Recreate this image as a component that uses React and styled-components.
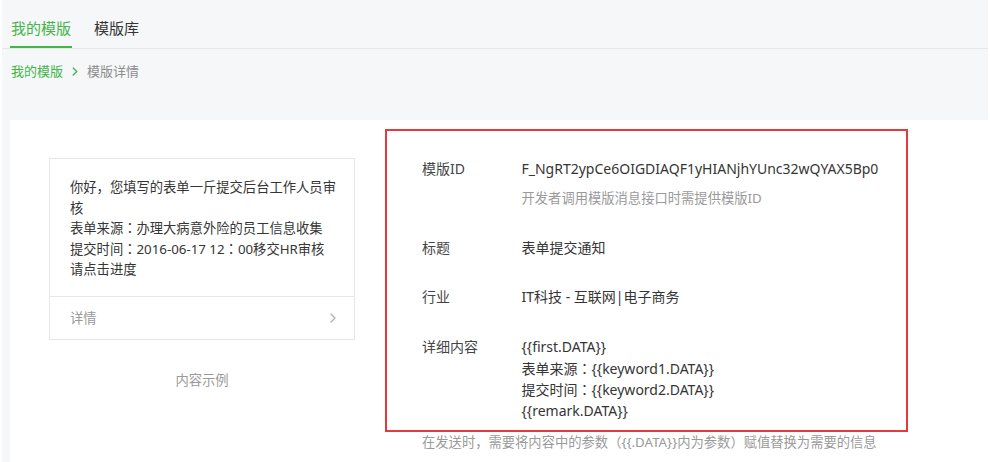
import React from "react";
import styled, { createGlobalStyle } from "styled-components";

const Global = createGlobalStyle`
  html, body { margin: 0; padding: 0; background: #ffffff; }
  body { font-family: "Noto Sans", "Noto Sans CJK SC", sans-serif; color: #353535; }
  * { box-sizing: border-box; }
`;

const Page = styled.div`
  margin: 0 2px;
  height: 462px;
  background: #f6f7f9;
  overflow: hidden;
`;

const TabBar = styled.div`
  display: flex;
  align-items: flex-end;
  height: 49px;
  padding-left: 8px;
  border-bottom: 1px solid #e4e8eb;
`;

const Tab = styled.div`
  font-size: 15px;
  line-height: 20px;
  padding: 0 1px 8px;
  margin-right: 21px;
  color: ${(p) => (p.$active ? "#44b549" : "#353535")};
  border-bottom: 2px solid ${(p) => (p.$active ? "#44b549" : "transparent")};
`;

const Crumbs = styled.div`
  display: flex;
  align-items: center;
  gap: 9px;
  margin: 12px 0 0 9px;
  font-size: 13px;
  line-height: 20px;
`;

const CrumbLink = styled.span`
  color: #44b549;
`;

const CrumbCurrent = styled.span`
  color: #8d8d8d;
`;

const Panel = styled.div`
  display: flex;
  align-items: flex-start;
  gap: 30px;
  margin: 39px 0 0 8px;
  padding: 9px 0 0 39px;
  background: #ffffff;
  min-height: 350px;
`;

const ExampleCol = styled.div`
  width: 306px;
  margin-top: 29px;
  display: flex;
  flex-direction: column;
  align-items: stretch;
`;

const Card = styled.div`
  border: 1px solid #e7e7eb;
  background: #fff;
`;

const CardBody = styled.div`
  padding: 18px 16px 16px 20px;
  font-size: 13.3px;
  line-height: 20.6px;
  color: #353535;
`;

const CardFoot = styled.div`
  display: flex;
  align-items: center;
  justify-content: space-between;
  height: 43px;
  padding: 0 18px 0 20px;
  border-top: 1px solid #e7e7eb;
  font-size: 13.3px;
  color: #9a9a9a;
`;

const Caption = styled.div`
  margin-top: 30px;
  text-align: center;
  font-size: 13.3px;
  line-height: 20px;
  color: #9a9a9a;
`;

const InfoCol = styled.div`
  display: flex;
  flex-direction: column;
`;

const Highlight = styled.div`
  width: 523px;
  border: 2px solid #e5393c;
  padding: 28px 20px 9px 35px;
`;

const Row = styled.div`
  display: flex;
  font-size: 14px;
  line-height: 20px;
  margin-top: ${(p) => p.$gap || 0}px;
`;

const Label = styled.div`
  width: 99.5px;
  flex: none;
  color: #454545;
`;

const Value = styled.div`
  color: #353535;
  line-height: ${(p) => p.$lh || "20px"};
`;

const Hint = styled.div`
  margin-top: 9px;
  color: #9a9a9a;
  font-size: 13.3px;
  line-height: 20px;
`;

const Note = styled.div`
  padding-left: 37px;
  font-size: 13.3px;
  line-height: 20px;
  color: #9a9a9a;
`;

const Colon = styled.span`
  font-family: "Noto Sans CJK JP", "Noto Sans CJK SC", sans-serif;
`;

const Chevron = ({ color, w = 6, h = 10, sw = 1.3 }) => (
  <svg width={w} height={h} viewBox="0 0 6 10" fill="none">
    <polyline points="1,1 5,5 1,9" stroke={color} strokeWidth={sw} strokeLinecap="round" strokeLinejoin="round" />
  </svg>
);

const C = () => <Colon>：</Colon>;

export default function App() {
  return (
    <>
      <Global />
      <Page>
        <TabBar>
          <Tab $active>我的模版</Tab>
          <Tab>模版库</Tab>
        </TabBar>
        <Crumbs>
          <CrumbLink>我的模版</CrumbLink>
          <Chevron color="#44b549" w={6} h={9} sw={1.5} />
          <CrumbCurrent>模版详情</CrumbCurrent>
        </Crumbs>
        <Panel>
          <ExampleCol>
            <Card>
              <CardBody>
                你好，您填写的表单一斤提交后台工作人员审核
                <br />
                表单来源<C />办理大病意外险的员工信息收集
                <br />
                提交时间<C />2016-06-17 12<C />00移交HR审核
                <br />
                请点击进度
              </CardBody>
              <CardFoot>
                <span>详情</span>
                <Chevron color="#b2b2b2" />
              </CardFoot>
            </Card>
            <Caption>内容示例</Caption>
          </ExampleCol>
          <InfoCol>
            <Highlight>
              <Row>
                <Label>模版ID</Label>
                <div>
                  <Value>F_NgRT2ypCe6OIGDIAQF1yHIANjhYUnc32wQYAX5Bp0</Value>
                  <Hint>开发者调用模版消息接口时需提供模版ID</Hint>
                </div>
              </Row>
              <Row $gap={30}>
                <Label>标题</Label>
                <Value>表单提交通知</Value>
              </Row>
              <Row $gap={29}>
                <Label>行业</Label>
                <Value>IT科技 - 互联网|电子商务</Value>
              </Row>
              <Row $gap={30}>
                <Label>详细内容</Label>
                <Value $lh="20.5px">
                  {"{{first.DATA}}"}
                  <br />
                  表单来源<C />{"{{keyword1.DATA}}"}
                  <br />
                  提交时间<C />{"{{keyword2.DATA}}"}
                  <br />
                  {"{{remark.DATA}}"}
                </Value>
              </Row>
            </Highlight>
            <Note>在发送时，需要将内容中的参数（{"{{.DATA}}"}内为参数）赋值替换为需要的信息</Note>
          </InfoCol>
        </Panel>
      </Page>
    </>
  );
}
